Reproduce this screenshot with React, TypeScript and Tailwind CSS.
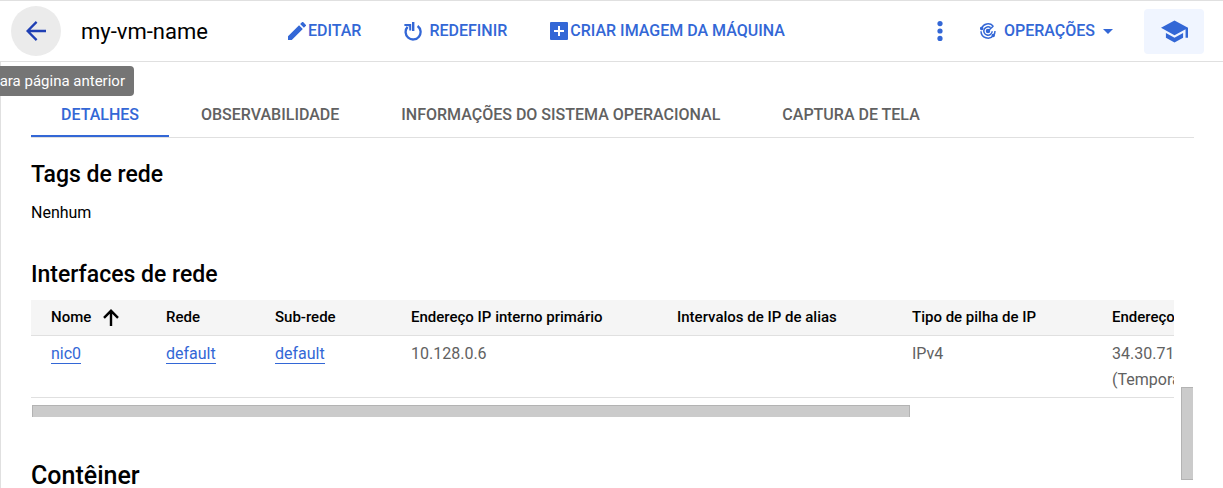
import type { ReactNode } from "react";

const TABS = ["DETALHES", "OBSERVABILIDADE", "INFORMAÇÕES DO SISTEMA OPERACIONAL", "CAPTURA DE TELA"];

function ToolbarButton({ icon, gap, children }: { icon: ReactNode; gap: string; children: ReactNode }) {
  return (
    <button type="button" className={`flex items-center ${gap} whitespace-nowrap text-base font-medium text-[#3367d6]`}>
      {icon}
      {children}
    </button>
  );
}

function PencilIcon() {
  return (
    <svg viewBox="3 3 18 18" className="size-[18px] fill-current" aria-hidden="true">
      <path d="M3 17.25V21h3.75L17.81 9.94l-3.75-3.75L3 17.25zM20.71 7.04a1 1 0 0 0 0-1.41l-2.34-2.34a1 1 0 0 0-1.41 0l-1.83 1.83 3.75 3.75 1.83-1.83z" />
    </svg>
  );
}

function ResetIcon() {
  return (
    <svg viewBox="0 0 18 19" className="h-[19px] w-[18px]" aria-hidden="true">
      <path d="M3.6 4.9A7.5 7.5 0 1 0 13.6 4" fill="none" stroke="currentColor" strokeWidth="2.3" />
      <path d="M0.4 2H7.2V8.6H5.2V4.6L3.6 4H0.4z" fill="currentColor" />
      <path d="M8 0h2.4v9H8z" fill="currentColor" />
    </svg>
  );
}

function AddBoxIcon() {
  return (
    <svg viewBox="0 0 18 18" className="size-[18px] fill-current" aria-hidden="true">
      <path fillRule="evenodd" d="M1 0h16a1 1 0 0 1 1 1v16a1 1 0 0 1-1 1H1a1 1 0 0 1-1-1V1a1 1 0 0 1 1-1zM8 4v4H4v2h4v4h2v-4h4V8h-4V4z" />
    </svg>
  );
}

function OperationsIcon() {
  return (
    <svg viewBox="0 0 16 16" className="size-4" fill="none" stroke="currentColor" strokeWidth="1.5" aria-hidden="true">
      <path d="M13.1 3A7 7 0 0 0 1.6 5.2" />
      <path d="M1 8.2A7 7 0 0 0 13.6 12.3" />
      <path d="M15 8a7 7 0 0 1-1.4 4.3" />
      <path d="M10.6 4.7A4.2 4.2 0 1 0 12.2 8.2" />
      <path d="M8 8l5.4-5" />
      <circle cx="8" cy="8" r="1.5" fill="currentColor" />
      <circle cx="1.7" cy="5.4" r="1" fill="currentColor" />
      <circle cx="13.2" cy="12.6" r="1" fill="currentColor" />
    </svg>
  );
}

function Header() {
  return (
    <header className="flex h-[62px] shrink-0 items-center border-y border-[#e0e0e0] pl-[11px] pr-[19px]">
      <div className="relative">
        <button
          type="button"
          aria-label="Voltar"
          aria-describedby="back-tip"
          className="flex size-[50px] items-center justify-center rounded-full bg-[#ebebeb] text-[#1f3fb4]"
        >
          <svg viewBox="0 0 20 20" className="size-5" fill="none" stroke="currentColor" strokeWidth="2.3" aria-hidden="true">
            <path d="M20 10H2M10.6 0.9L1.6 10l9 9.1" />
          </svg>
        </button>
        <div
          id="back-tip"
          role="tooltip"
          className="absolute right-[-73px] top-[60px] z-10 flex h-[30px] items-center whitespace-nowrap rounded bg-[#757575] px-[9px] text-[15px] text-white"
        >
          para página anterior
        </div>
      </div>
      <h1 className="ml-5 whitespace-nowrap text-[22px] text-black">my-vm-name</h1>
      <div className="ml-20 flex items-center gap-[43px]">
        <ToolbarButton gap="gap-0.5" icon={<PencilIcon />}>EDITAR</ToolbarButton>
        <ToolbarButton gap="gap-[7px]" icon={<ResetIcon />}>REDEFINIR</ToolbarButton>
        <ToolbarButton gap="gap-0.5" icon={<AddBoxIcon />}>CRIAR IMAGEM DA MÁQUINA</ToolbarButton>
      </div>
      <div className="ml-auto flex items-center">
        <button type="button" aria-label="Mais ações" className="mr-[37px] text-[#3367d6]">
          <svg viewBox="0 0 6 20" className="h-5 w-[6px] fill-current" aria-hidden="true">
            <circle cx="3" cy="2.6" r="2.6" />
            <circle cx="3" cy="10" r="2.6" />
            <circle cx="3" cy="17.4" r="2.6" />
          </svg>
        </button>
        <ToolbarButton gap="gap-2" icon={<OperationsIcon />}>
          OPERAÇÕES
          <svg viewBox="0 0 10 5" className="h-[5px] w-[10px] fill-current" aria-hidden="true">
            <path d="M0 0h10L5 5z" />
          </svg>
        </ToolbarButton>
        <button
          type="button"
          aria-label="Aprender"
          className="ml-[31px] flex h-[45px] w-[60px] items-center justify-center rounded bg-[#f0f5ff] text-[#3367d6]"
        >
          <svg viewBox="1 3 22 18" className="h-[23px] w-[27px] fill-current" aria-hidden="true">
            <path d="M5 13.18v4L12 21l7-3.82v-4L12 17l-7-3.82zM12 3L1 9l11 6 9-4.91V17h2V9L12 3z" />
          </svg>
        </button>
      </div>
    </header>
  );
}

function Tabs() {
  return (
    <div role="tablist" className="ml-[30px] mr-[29px] mt-[30px] flex h-[46px] shrink-0 gap-0.5 border-b border-[#e0e0e0]">
      {TABS.map((tab, i) => (
        <button
          key={tab}
          type="button"
          role="tab"
          aria-selected={i === 0}
          className={
            i === 0
              ? "whitespace-nowrap border-b-2 border-[#3367d6] px-[30px] pt-[3px] text-base font-medium text-[#3367d6]"
              : "whitespace-nowrap border-b-2 border-transparent px-[30px] pt-[3px] text-base font-medium text-[#616161]"
          }
        >
          {tab}
        </button>
      ))}
    </div>
  );
}

function CellLink({ children }: { children: ReactNode }) {
  return (
    <a href="#" className="inline-block border-b border-[#3367d6] leading-[18px] text-[#3367d6]">
      {children}
    </a>
  );
}

function InterfacesTable() {
  return (
    <div className="mt-[9px] overflow-hidden">
      <table className="w-[1334px] table-fixed border-collapse text-left">
        <colgroup>
          <col className="w-[115px]" />
          <col className="w-[109px]" />
          <col className="w-[136px]" />
          <col className="w-[266px]" />
          <col className="w-[235px]" />
          <col className="w-[200px]" />
          <col />
        </colgroup>
        <thead>
          <tr className="h-[35px] border-b border-[#e0e0e0] bg-[#f5f5f5] text-[15px] text-black *:whitespace-nowrap *:py-0 *:pl-5 *:font-medium">
            <th scope="col" aria-sort="ascending">
              <span className="flex items-center gap-3">
                Nome
                <svg viewBox="0 0 16 17" className="h-[17px] w-4" fill="none" stroke="currentColor" strokeWidth="2.4" aria-hidden="true">
                  <path d="M8 17V2M1 8.8L8 1.8l7 7" />
                </svg>
              </span>
            </th>
            <th scope="col">Rede</th>
            <th scope="col">Sub-rede</th>
            <th scope="col">Endereço IP interno primário</th>
            <th scope="col">Intervalos de IP de alias</th>
            <th scope="col">Tipo de pilha de IP</th>
            <th scope="col">Endereço IP externo</th>
          </tr>
        </thead>
        <tbody>
          <tr className="border-b border-[#e0e0e0] text-base leading-[26px] text-[#616161] *:pb-1 *:pl-5 *:pt-[5px] *:align-top">
            <td><CellLink>nic0</CellLink></td>
            <td><CellLink>default</CellLink></td>
            <td><CellLink>default</CellLink></td>
            <td>10.128.0.6</td>
            <td></td>
            <td>IPv4</td>
            <td>34.30.71<br />(Temporário)</td>
          </tr>
        </tbody>
      </table>
    </div>
  );
}

export default function App() {
  return (
    <div className="h-screen overflow-hidden bg-white font-[Roboto,sans-serif]">
      <div className="flex h-full flex-col">
        <Header />
        <div className="flex min-h-0 flex-1 flex-col border-l border-[#e0e0e0]">
          <Tabs />
          <div className="flex min-h-0 flex-1 items-start gap-[7px] px-[30px]">
            <main className="min-w-0 flex-1 text-black">
              <h2 className="mt-[21px] text-[23px] font-medium leading-8">Tags de rede</h2>
              <p className="mt-[10px] text-base leading-6">Nenhum</p>
              <h2 className="mt-[34px] text-[23px] font-medium leading-8">Interfaces de rede</h2>
              <InterfacesTable />
              <div className="ml-px mt-[7px] h-3 w-[76.8%] border-l border-r border-t border-[#b3b3b3] bg-[#cbcbcb]" />
              <h2 className="mt-[43px] text-[25px] font-medium leading-8">Contêiner</h2>
            </main>
            <div className="mt-[249px] h-[93px] w-3 shrink-0 border-b border-l border-t border-[#b3b3b3] bg-[#cbcbcb]" />
          </div>
        </div>
      </div>
    </div>
  );
}
